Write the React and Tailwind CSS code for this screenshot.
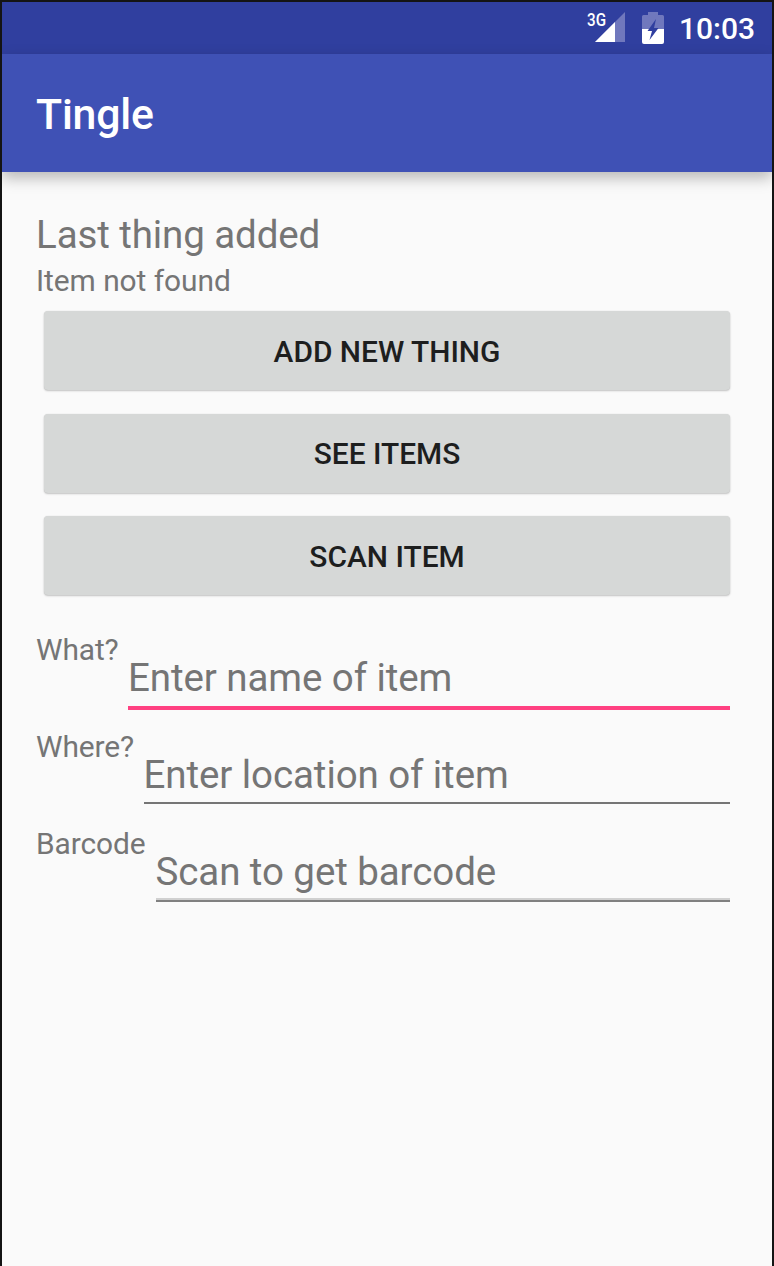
import React from 'react';

function SignalIcon() {
  return (
    <svg className="h-[34px] w-[40px]" viewBox="0 0 40 34" aria-hidden="true">
      <path d="M38 2V32H8Z" fill="#7078bd" />
      <path d="M28 12V32H8Z" fill="#fff" />
      <text x="0" y="15.7" fill="#fff" fontSize="18" fontWeight="500" fontFamily="Roboto, sans-serif" textLength="19" lengthAdjust="spacingAndGlyphs">3G</text>
    </svg>
  );
}

function BatteryIcon() {
  return (
    <svg className="h-[32px] w-[22px]" viewBox="0 0 22 32" aria-hidden="true">
      <path d="M6 0H16V3H20.5Q22 3 22 4.500V17H0V4.500Q0 3 1.500 3H6Z" fill="#7078bd" />
      <path d="M0 17H22V30Q22 32 20 32H2Q0 32 0 30Z" fill="#fff" />
      <path d="M14 7L5.500 19H10L7.500 28L16.500 16H12Z" fill="#303f9f" />
    </svg>
  );
}

function RaisedButton({ children }) {
  return (
    <button className="flex h-[79px] w-full items-center justify-center rounded-[4px] bg-[#d6d8d7] pt-[1px] text-[29.9px] font-medium leading-[35px] text-[#1d1e1e] shadow-[0_1px_2px_rgba(0,0,0,0.22),0_0_1px_rgba(0,0,0,0.12)]">
      {children}
    </button>
  );
}

function Field({ label, labelWidth, placeholder, line }) {
  return (
    <div className="flex h-[97px] items-start">
      <label className={`${labelWidth} shrink-0 whitespace-nowrap text-[29.9px] leading-[35px] tracking-[-0.1px]`}>{label}</label>
      <div className="min-w-0 flex-1 pt-[23px]">
        <input
          className="block h-[46px] w-full bg-transparent p-0 text-[38.5px] leading-[46px] tracking-[-0.08px] outline-none placeholder:text-[#757575]"
          placeholder={placeholder}
          aria-label={label}
        />
        <div className={line} />
      </div>
    </div>
  );
}

export default function App() {
  return (
    <div className="flex h-[1266px] w-[774px] flex-col overflow-hidden border-x-2 border-t-2 border-[#141414] bg-[#fafafa] font-[Roboto,sans-serif] text-[#757575]">
      <div className="flex h-[52px] shrink-0 items-start bg-[#303f9f] pl-[585px] text-white">
        <div className="pt-[8px]"><SignalIcon /></div>
        <div className="ml-[15px] pt-[10px]"><BatteryIcon /></div>
        <span className="ml-[15px] pt-[9px] text-[30px] font-medium leading-[35px]">10:03</span>
      </div>
      <header className="flex h-[118px] shrink-0 items-center bg-[#3f51b5] pl-[34px] shadow-[0_6px_14px_rgba(0,0,0,0.27)]">
        <h1 className="pt-[2px] text-[42.8px] font-medium leading-[50px] tracking-[-0.2px] text-white">Tingle</h1>
      </header>
      <main className="pl-[34px] pr-[42px] pt-[40px]">
        <h2 className="text-[38.5px] leading-[46px] tracking-[-0.1px]">Last thing added</h2>
        <p className="mt-[5px] text-[29.9px] leading-[35px] tracking-[-0.05px]">Item not found</p>
        <div className="ml-[8px] mt-[13px] flex flex-col gap-[23.500px]">
          <RaisedButton>ADD NEW THING</RaisedButton>
          <RaisedButton>SEE ITEMS</RaisedButton>
          <RaisedButton>SCAN ITEM</RaisedButton>
        </div>
        <div className="pt-[37px]">
          <Field label="What?" labelWidth="w-[92px]" placeholder="Enter name of item" line="mt-[5px] h-[4px] bg-[#ff4081]" />
          <Field label="Where?" labelWidth="w-[107.500px]" placeholder="Enter location of item" line="mt-[4px] h-[2px] bg-[#757575]" />
          <Field label="Barcode" labelWidth="w-[119.500px]" placeholder="Scan to get barcode" line="mt-[3px] h-[4px] border-t-2 border-[#d0d0d0] bg-[#808080]" />
        </div>
      </main>
    </div>
  );
}
